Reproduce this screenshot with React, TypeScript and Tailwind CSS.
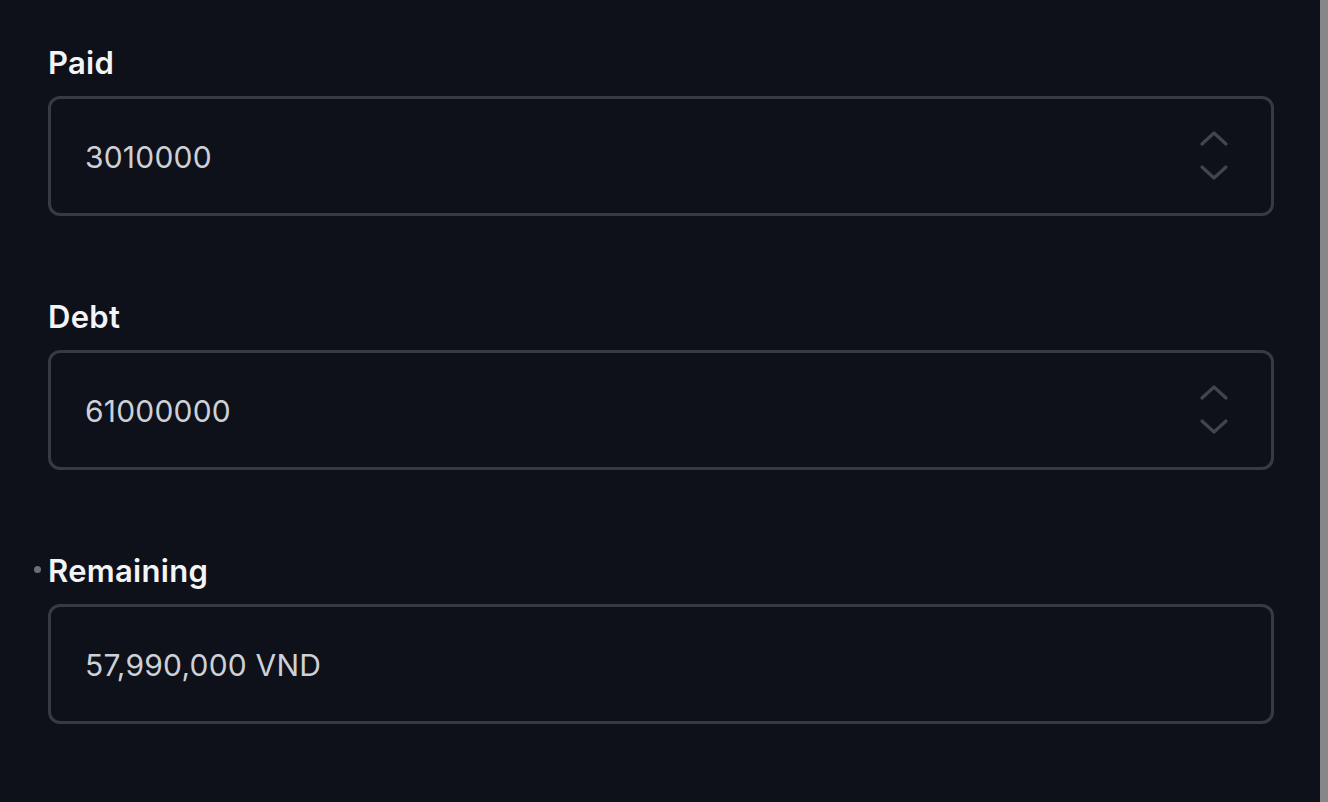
import { ReactNode } from "react";

interface FieldProps {
  label: string;
  children: ReactNode;
  dot?: boolean;
}

const Spinner = () => (
  <svg width="30" height="50" viewBox="0 0 30 50" fill="none" className="text-[#41454d] mr-[-2px]">
    <path d="M3 13 L15 2 L27 13" stroke="currentColor" strokeWidth="3.2" strokeLinecap="round" strokeLinejoin="round" />
    <path d="M3 36 L15 47 L27 36" stroke="currentColor" strokeWidth="3.2" strokeLinecap="round" strokeLinejoin="round" />
  </svg>
);

const Field = ({ label, children, dot = false }: FieldProps) => (
  <div className="flex flex-col">
    <div className="relative h-[40px] flex items-center mb-[14px]">
      {dot && <span className="absolute left-[-14px] top-[16px] w-[7px] h-[7px] rounded-full bg-[#6b6e75]"></span>}
      <span className="text-[31px] font-semibold text-[#f3f4f6] leading-none tracking-[0.3px]">{label}</span>
    </div>
    <div className="h-[120px] border-[3px] border-[#353a43] rounded-[12px] flex items-center pl-[34px] pr-[44px]">
      {children}
    </div>
  </div>
);

export default function App() {
  const value = "text-[30px] text-[#cdd0d6] tracking-[0.2px] mt-[3px]";
  return (
    <div
      className="w-[1328px] h-[802px] bg-[#0e1119] flex overflow-hidden"
      style={{ fontFamily: "Inter, 'Noto Sans', sans-serif" }}>
      <div className="flex-1 pl-[48px] pr-[46px] pt-[42px] flex flex-col gap-[80px]">
        <Field label="Paid">
          <span className={`${value} flex-1`}>3010000</span>
          <Spinner />
        </Field>
        <Field label="Debt">
          <span className={`${value} flex-1`}>61000000</span>
          <Spinner />
        </Field>
        <Field label="Remaining" dot>
          <span className={value}>57,990,000 VND</span>
        </Field>
      </div>
      <div className="w-[8px] h-full bg-[#87878a]"></div>
    </div>
  );
}
